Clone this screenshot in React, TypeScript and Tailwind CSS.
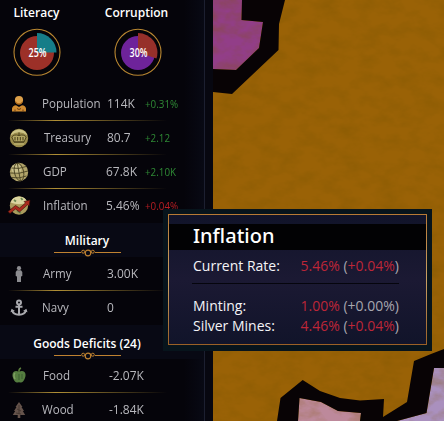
import React from "react";

const sans = "font-['Open_Sans','Noto_Sans',sans-serif]";

function PersonIcon() {
  return (
    <svg width="16" height="18" viewBox="0 0 16 18">
      <circle cx="8" cy="5" r="4.1" fill="#dda04a" />
      <path d="M4 5.5Q8 11 12 5.5Q11 10 8 9.8Q5 10 4 5.5Z" fill="#b06c1c" />
      <path d="M1 16.5V13.5Q1.5 10.5 5 10.2L8 12L11 10.2Q14.5 10.5 15 13.5V16.5Z" fill="#d08b30" />
      <path d="M6 13.5L8 14.5L10 13.5M4 14.5V16.5M12 14.5V16.5" stroke="#6c3d14" strokeWidth="1" fill="none" />
    </svg>
  );
}

function CoinIcon() {
  return (
    <svg width="20" height="20" viewBox="0 0 20 20">
      <circle cx="10" cy="10" r="9.2" fill="#9a8c4c" />
      <path d="M1.5 7.5A9 9 0 0 1 18.5 7.5Q10 1 1.5 7.5Z" fill="#cdc487" />
      <path d="M2.8 9Q5 6 10 7.5Q15 6 17.2 9L15 14H5Z" fill="#b3a764" stroke="#463d19" strokeWidth=".9" />
      <path d="M6 9V12.5M8.7 9V12.5M11.3 9V12.5M14 9V12.5M10 4.5V7.5M5 14H15" stroke="#463d19" strokeWidth="1" />
      <path d="M5 16H15" stroke="#cabf7c" />
    </svg>
  );
}

function GlobeIcon() {
  return (
    <svg width="20" height="20" viewBox="0 0 20 20">
      <circle cx="10" cy="10" r="9.2" fill="#b1a46a" />
      <circle cx="7.5" cy="7" r="5" fill="#d2ca98" opacity=".7" />
      <g fill="none" stroke="#4a4323" strokeWidth=".9">
        <ellipse cx="10" cy="10" rx="4.6" ry="9" transform="rotate(-12 10 10)" />
        <path d="M8.3 1L11.5 19M2.5 6Q10 7.5 17 4.5M1 11Q10 12.5 19 9M3 15.5Q10 17 17.5 14" />
      </g>
    </svg>
  );
}

function InflationIcon() {
  return (
    <svg width="24" height="22" viewBox="0 0 24 22">
      <circle cx="12" cy="10.5" r="9.2" fill="#ab9b5c" />
      <path d="M3.5 7.5A9 9 0 0 1 20.5 7.5Q12 11 3.5 7.5Z" fill="#dbd5a0" />
      <path d="M7 5L9 6.5M14 3L15.5 5M10 16L14 18" stroke="#6d8750" strokeWidth="1.8" />
      <path d="M1 16.5L8.5 10.5L12.5 13L18.5 8L17 6.5L23 5L22.2 11L20.5 9.8L12.5 17L8.5 14L3 18.5Z" fill="#aa2a1d" stroke="#3a0d08" strokeWidth=".6" />
    </svg>
  );
}

function ArmyIcon() {
  return (
    <svg width="10" height="18" viewBox="0 0 10 18" fill="#8c8c90">
      <circle cx="5" cy="3.2" r="2.1" />
      <path d="M3 5.2H7L8.3 7V11L7 11.5V17H3V11.5L1.7 11V7Z" />
    </svg>
  );
}

function AnchorIcon() {
  return (
    <svg width="18" height="18" viewBox="0 0 18 18" fill="none" stroke="#a9a9ae" strokeWidth="2">
      <circle cx="9" cy="3.5" r="2" />
      <path d="M9 5.5V16M5.5 7.8H12.5M2 11Q3 15.5 9 15.8Q15 15.5 16 11" />
      <path d="M.5 13.2L1.6 9.8L5 12ZM17.5 13.2L16.4 9.8L13 12Z" fill="#a9a9ae" stroke="none" />
    </svg>
  );
}

function AppleIcon() {
  return (
    <svg width="16" height="17" viewBox="0 0 16 17">
      <path d="M8 5Q5 3 2.5 5Q.5 7.5 2.2 11.5Q4 16 6.5 15.5Q8 15 9.5 15.5Q12 16 13.8 11.5Q15.5 7.5 13.5 5Q11 3 8 5Z" fill="#557d40" />
      <path d="M4 6Q2 8 4 12" stroke="#7f9f62" strokeWidth="1.5" fill="none" />
      <path d="M11 7V12M8 7V13" stroke="#3b5f30" />
      <path d="M8 5Q7.5 2 10 1" stroke="#5c7f3d" strokeWidth="1.4" fill="none" />
    </svg>
  );
}

function TreeIcon() {
  return (
    <svg width="14" height="18" viewBox="0 0 14 18">
      <path d="M7 1L10.5 6H9.5L12 10H10.8L13.2 14H8.3V17H5.7V14H.8L3.2 10H2L4.5 6H3.5Z" fill="#65534b" />
      <path d="M7 4V13M5 8L9 10M4 12L9 13" stroke="#463932" />
    </svg>
  );
}

function Pie({ label, base, slice, path }: { label: string; base: string; slice: string; path: string }) {
  return (
    <svg width="48" height="48" viewBox="0 0 48 48" className="block">
      <circle cx="24" cy="24.3" r="23" fill="#050409" stroke="#b98731" strokeWidth="1.1" />
      <circle cx="24" cy="25" r="17" fill={base} />
      <path d={path} fill={slice} />
      <text x="24.5" y="29.3" textAnchor="middle" textLength="18" lengthAdjust="spacingAndGlyphs" fill="#fff" className={`${sans} text-[12px] font-semibold`}>
        {label}
      </text>
    </svg>
  );
}

function Ornament() {
  return (
    <svg width="67" height="8" viewBox="0 0 67 8" fill="none" stroke="#c08230" className="block">
      <path d="M0 3.5H27M41 3.5H67" strokeWidth="1" />
      <circle cx="34" cy="4" r="2.8" strokeWidth="1.2" />
      <circle cx="29.2" cy="2.7" r="1.5" />
      <circle cx="38.8" cy="2.7" r="1.5" />
    </svg>
  );
}

type RowProps = {
  icon: React.ReactNode;
  label: string;
  labelClass: string;
  value: string;
  valueClass: string;
  delta?: string;
  deltaClass?: string;
  divider?: boolean;
};

function Row({ icon, label, labelClass, value, valueClass, delta, deltaClass = "", divider }: RowProps) {
  return (
    <div className="flex h-[34px] w-[204px] flex-col">
      <div className="flex h-[33px] items-center whitespace-nowrap text-[13px] leading-none text-[#b9b9be]">
        <div className="flex w-[38px] shrink-0 justify-center">{icon}</div>
        <div className={`w-[68px] shrink-0 ${labelClass}`}>
          <span className="inline-block origin-left scale-x-[.89]">{label}</span>
        </div>
        <div className={`w-[39px] shrink-0 ${valueClass}`}>
          <span className="inline-block origin-left scale-x-[.92]">{value}</span>
        </div>
        {delta && (
          <div className={`text-[10px] ${deltaClass}`}>
            <span className="inline-block origin-left scale-x-[.98]">{delta}</span>
          </div>
        )}
      </div>
      {divider && (
        <div className="ml-2 h-px w-[159px] bg-linear-to-r from-transparent via-[#b08f35] via-30% to-transparent" />
      )}
    </div>
  );
}

function Heading({ children }: { children: string }) {
  return (
    <div className="flex w-[174px] flex-col items-center">
      <div className="flex h-4 items-center text-[12px] font-semibold leading-none text-white">{children}</div>
      <Ornament />
    </div>
  );
}

function WorldMap() {
  return (
    <svg width="231" height="421" viewBox="213 0 231 421" className="block shrink-0">
      <defs>
        <filter id="paper" x="0" y="0" width="100%" height="100%">
          <feTurbulence type="fractalNoise" baseFrequency="0.05 0.08" numOctaves="4" seed="7" />
          <feColorMatrix values="0 0 0 0 0.2  0 0 0 0 0.09  0 0 0 0 0  0.7 0 0 0 -0.26" />
        </filter>
      </defs>
      <rect x="213" width="231" height="421" fill="#9a6206" />
      <path d="M213 0H242L241.5 20L263 22L259 48L236 70L213 69Z" fill="#923e88" />
      <path d="M299.5 398L321 402L338 411L361 413L360 421H298Z" fill="#bd899b" />
      <path d="M434 368H444V421H397L426.5 413Z" fill="#aa90be" />
      <rect x="213" width="231" height="421" filter="url(#paper)" />
      <g fill="#080305" fillRule="evenodd">
        <path d="M242 0H285L279 24L278.5 50L232 94L213 92V69L236 70L259 48L263 22L241.5 20Z" />
        <path d="M444 349L431 354L414 361L407 402L383 417L384 399L360 400.5L340 398L320 391L302.7 380L280.5 398L277 421H298L299.5 398L321 402L338 411L361 413L360 421H397L426.5 413L434 368H444Z" />
      </g>
    </svg>
  );
}

type RateProps = { label: string; rate: string; change: string; muted?: boolean };

function Rate({ label, rate, change, muted }: RateProps) {
  return (
    <div className="flex h-5 items-center justify-between text-[14px] leading-none">
      <span className="pl-px text-[#f4f4f7]">{label}</span>
      <span className="text-[#a6a6ae]">
        <span className="text-[#bd2638]">{rate}</span> (
        <span className={muted ? "text-[#a6a6ae]" : "text-[#bd2638]"}>{change}</span>)
      </span>
    </div>
  );
}

function Tooltip() {
  return (
    <div className="absolute left-[163px] top-[209px] h-[142px] w-[269px] bg-[#07141c] p-[5px]">
      <div className="h-[131px] w-[259px] bg-linear-to-b from-[#b77a35] via-[#c9a064] to-[#9a6026] p-px">
        <div className="h-full bg-linear-to-b from-[#11142a] via-[#1b1933] to-[#11142a] pt-[9px]">
          <div className="flex h-[26px] items-center bg-[#020204] pb-0.5 pl-6 font-['Noto_Sans','Open_Sans',sans-serif] text-[20px] font-medium leading-none text-white">
            Inflation
          </div>
          <div className="ml-[23px] w-[207px] whitespace-nowrap pt-[6px]">
            <Rate label="Current Rate:" rate="5.46%" change="+0.04%" />
            <div className="mb-3 mt-[7px] h-px bg-[#05050d]" />
            <Rate label="Minting:" rate="1.00%" change="+0.00%" muted />
            <Rate label="Silver Mines:" rate="4.46%" change="+0.04%" />
          </div>
        </div>
      </div>
    </div>
  );
}

export default function App() {
  return (
    <div className={`relative flex h-[421px] w-[444px] overflow-hidden bg-[#070710] ${sans}`}>
      <aside className="flex h-full w-[213px] shrink-0 bg-[#070710]">
        <div className="h-full w-[205px] border-r border-[#1c1f30] bg-linear-to-r from-[#05040a] from-90% to-[#080914]">
          <div className="flex h-[87px] pt-[5px] text-[12px] font-semibold leading-none text-white">
            <div className="flex w-[73px] flex-col items-center">
              <div className="flex h-4 items-center">Literacy</div>
              <div className="mt-[7px]">
                <Pie label="25%" base="#9c3028" slice="#167d88" path="M24 24.5V5A19.5 19.5 0 0 1 43.5 24.5Z" />
              </div>
            </div>
            <div className="ml-[14px] flex w-[101px] flex-col items-center">
              <div className="flex h-4 items-center whitespace-nowrap pr-0.5">Corruption</div>
              <div className="mt-[7px]">
                <Pie label="30%" base="#6e239a" slice="#96302a" path="M24 24.5V5A19.5 19.5 0 0 1 42.5 30.5Z" />
              </div>
            </div>
          </div>
          <Row icon={<PersonIcon />} label="Population" labelClass="pl-1" value="114K" valueClass="pl-px" delta="+0.31%" deltaClass="text-[#2f8a35]" divider />
          <Row icon={<CoinIcon />} label="Treasury" labelClass="pl-[6px]" value="80.7" valueClass="pl-px" delta="+2.12" deltaClass="text-[#2f8a35]" divider />
          <Row icon={<GlobeIcon />} label="GDP" labelClass="pl-[5px]" value="67.8K" valueClass="" delta="+2.10K" deltaClass="text-[#2f8a35]" divider />
          <Row icon={<InflationIcon />} label="Inflation" labelClass="pl-[5px]" value="5.46%" valueClass="" delta="+0.04%" deltaClass="text-[#b81e24]" />
          <div className="h-[34px] bg-[#080914] pt-[10px]">
            <Heading>Military</Heading>
          </div>
          <Row icon={<ArmyIcon />} label="Army" labelClass="pl-[5px]" value="3.00K" valueClass="pl-px" divider />
          <Row icon={<AnchorIcon />} label="Navy" labelClass="pl-1" value="0" valueClass="pl-px" />
          <div className="h-[34px] bg-[#080914] pt-[11px]">
            <Heading>Goods Deficits (24)</Heading>
          </div>
          <Row icon={<AppleIcon />} label="Food" labelClass="pl-[5px]" value="-2.07K" valueClass="pl-[3px]" divider />
          <Row icon={<TreeIcon />} label="Wood" labelClass="pl-1" value="-1.84K" valueClass="pl-[3px]" />
        </div>
      </aside>
      <WorldMap />
      <Tooltip />
    </div>
  );
}
